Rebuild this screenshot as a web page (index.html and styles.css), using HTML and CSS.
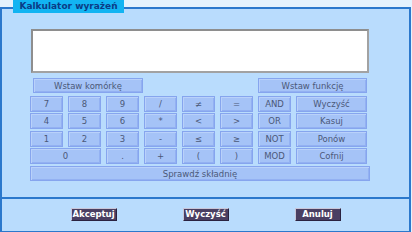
FILE: index.html
```html
<!DOCTYPE html>
<html lang="pl">
<head>
  <meta charset="UTF-8">
  <title>Kalkulator wyrażeń</title>
  <link rel="stylesheet" href="styles.css">
</head>
<body>
  <div class="dialog">
    <div class="title-tab">Kalkulator wyrażeń</div>
    <div class="panel">
      <div class="editor">
        <textarea class="expr"></textarea>
      </div>
      <div class="keys">
        <button class="key wide-left">Wstaw komórkę</button>
        <button class="key wide-right">Wstaw funkcję</button>

        <button class="key">7</button>
        <button class="key">8</button>
        <button class="key">9</button>
        <button class="key">/</button>
        <button class="key">≠</button>
        <button class="key">=</button>
        <button class="key">AND</button>
        <button class="key">Wyczyść</button>

        <button class="key">4</button>
        <button class="key">5</button>
        <button class="key">6</button>
        <button class="key">*</button>
        <button class="key">&lt;</button>
        <button class="key">&gt;</button>
        <button class="key">OR</button>
        <button class="key">Kasuj</button>

        <button class="key">1</button>
        <button class="key">2</button>
        <button class="key">3</button>
        <button class="key">-</button>
        <button class="key">≤</button>
        <button class="key">≥</button>
        <button class="key">NOT</button>
        <button class="key">Ponów</button>

        <button class="key span2">0</button>
        <button class="key">.</button>
        <button class="key">+</button>
        <button class="key">(</button>
        <button class="key">)</button>
        <button class="key">MOD</button>
        <button class="key">Cofnij</button>

        <button class="key check">Sprawdź składnię</button>
      </div>
    </div>
    <div class="footer">
      <button class="action">Akceptuj</button>
      <button class="action">Wyczyść</button>
      <button class="action">Anuluj</button>
    </div>
  </div>
</body>
</html>
```

FILE: styles.css
```css
body {
  margin: 0;
  padding: 0;
  background-color: #e4f2fd;
  font-family: 'DejaVu Sans', Verdana, sans-serif;
}

.dialog {
  position: relative;
  width: 407px;
  margin-top: 7px;
  border-left: 2px solid #2b78cc;
  border-right: 2px solid #2b78cc;
  border-bottom: 2px solid #2b78cc;
  background-color: #b9dcfd;
}

.title-tab {
  position: absolute;
  top: -7px;
  left: 11px;
  width: 111px;
  height: 13px;
  background-color: #12b4f2;
  color: #0b3c86;
  font-size: 9px;
  font-weight: bold;
  line-height: 13px;
  text-align: center;
}

.panel {
  border-top: 2px solid #2b78cc;
  border-bottom: 2px solid #2b78cc;
  padding: 20px 0 15px 28px;
}

.editor {
  width: 338px;
  height: 44px;
}

.expr {
  box-sizing: border-box;
  width: 100%;
  height: 100%;
  margin: 0 0 0 1px;
  border: 2px solid #a2a2a2;
  border-top-color: #8e8e8e;
  border-left-color: #8e8e8e;
  background-color: #fff;
  resize: none;
  outline: none;
}

.keys {
  display: grid;
  grid-template-columns: repeat(7, 33px) 71px;
  grid-auto-rows: 16px;
  column-gap: 5px;
  row-gap: 1.5px;
  margin-top: 5px;
}

.key {
  box-sizing: border-box;
  margin: 0;
  padding: 0;
  border: 1px solid #86a5ee;
  box-shadow: inset 1px 1px 0 #b9d1fa, inset -1px -1px 0 #93b1f2;
  background-color: #a5c3f7;
  color: #4b5878;
  font-family: 'DejaVu Sans', Verdana, sans-serif;
  font-size: 8.5px;
  line-height: 14px;
  text-align: center;
}

.wide-left {
  grid-column: 1 / span 3;
  justify-self: start;
  width: 110px;
  height: 15px;
  margin-left: 3px;
  margin-bottom: 1.5px;
}

.wide-right {
  grid-column: 7 / span 2;
  height: 15px;
  margin-bottom: 1.5px;
}

.span2 {
  grid-column: span 2;
}

.check {
  grid-column: 1 / -1;
  width: 340px;
  height: 15px;
}

.footer {
  display: flex;
  justify-content: center;
  align-items: center;
  gap: 66px;
  height: 32px;
}

.action {
  box-sizing: border-box;
  width: 46px;
  height: 13px;
  margin: 0;
  padding: 0;
  border: 1px solid #c9c6d8;
  border-right-color: #2a2240;
  border-bottom-color: #2a2240;
  background-color: #4a3f62;
  color: #fff;
  font-family: 'DejaVu Sans', Verdana, sans-serif;
  font-size: 8.5px;
  font-weight: bold;
  line-height: 11px;
}
```
